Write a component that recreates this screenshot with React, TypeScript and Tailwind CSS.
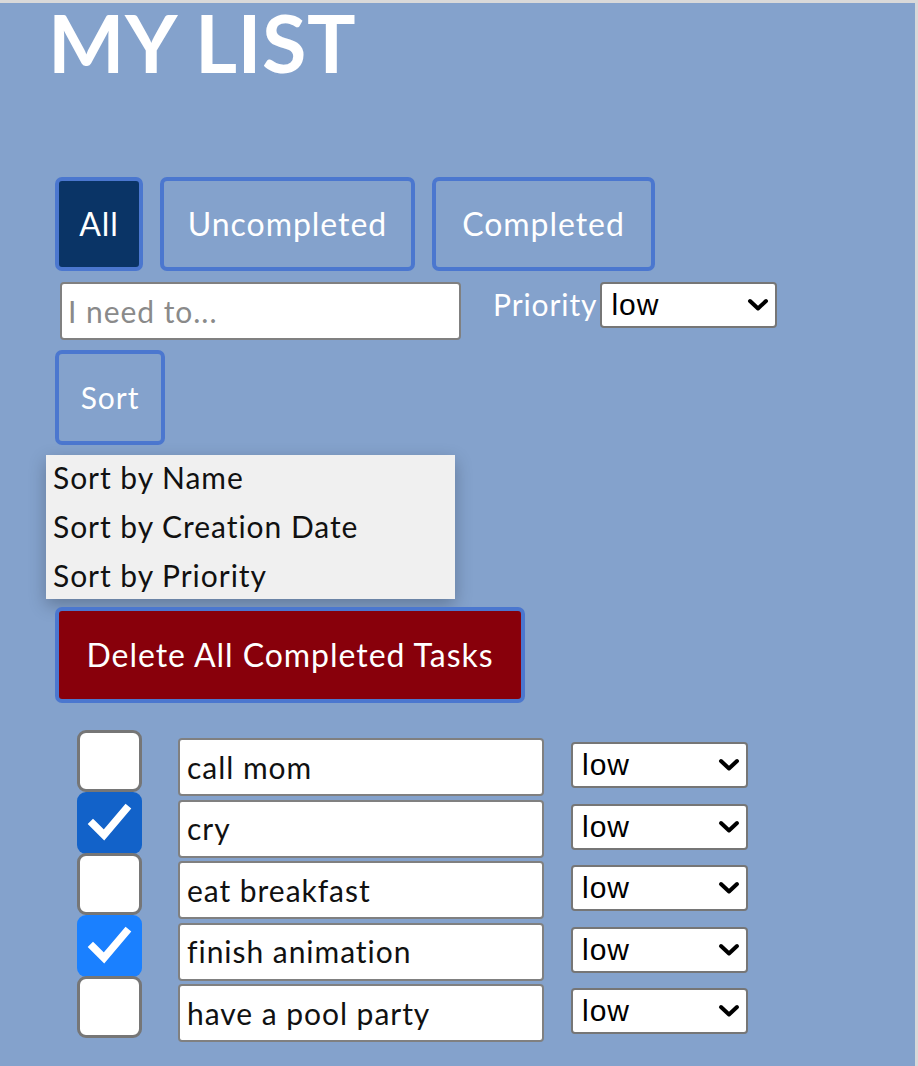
import React from "react";

const font = { fontFamily: "Lato, 'Open Sans', sans-serif" };

function Chevron() {
  return (
    <svg width="22" height="14" viewBox="0 0 22 14" className="shrink-0">
      <polyline points="3,3 11,10.5 19,3" fill="none" stroke="#000" strokeWidth="4" strokeLinecap="round" strokeLinejoin="round" />
    </svg>
  );
}

function Select({ w, h }: { w: string; h: string }) {
  return (
    <div className={`${w} ${h} bg-white border-2 border-[#767676] rounded-[4px] flex items-center justify-between pl-[9px] pr-[6px]`}>
      <span className="text-[30px] text-black leading-none" style={{ fontFamily: "'Liberation Sans', Arial, sans-serif" }}>low</span>
      <Chevron />
    </div>
  );
}

function Check({ checked, color }: { checked: boolean; color?: string }) {
  if (checked) {
    return (
      <div className={`w-[65px] h-[62px] rounded-[9px] flex items-center justify-center ${color}`}>
        <svg width="46" height="42" viewBox="0 0 46 42">
          <polyline points="6,22 17,33 39,7" fill="none" stroke="#fff" strokeWidth="7.5" strokeLinecap="square" strokeLinejoin="miter" />
        </svg>
      </div>
    );
  }
  return <div className="w-[65px] h-[62px] rounded-[9px] bg-white border-[3px] border-[#767676]" />;
}

const tasks = [
  { name: "call mom", checked: false },
  { name: "cry", checked: true, color: "bg-[#1262c9]" },
  { name: "eat breakfast", checked: false },
  { name: "finish animation", checked: true, color: "bg-[#1a80ff]" },
  { name: "have a pool party", checked: false },
];

export default function App() {
  return (
    <div className="w-[918px] h-[1066px] overflow-hidden bg-[#d9d9d9] pt-[3px] pr-[3px]" style={font}>
      <div className="h-full bg-[#84a2cc] flex flex-col tracking-[0.06em]">
        <h1 className="text-white font-bold text-[81px] leading-[78px] pl-[48px] tracking-[0.5px]">MY LIST</h1>

        <div className="flex gap-[17px] pl-[55px] mt-[96px]">
          <button className="h-[94px] w-[88px] rounded-[7px] border-[4px] border-[#4b77cf] bg-[#0a3466] text-white text-[32px]">All</button>
          <button className="h-[94px] w-[255px] rounded-[7px] border-[4px] border-[#4b77cf] text-white text-[32px]">Uncompleted</button>
          <button className="h-[94px] w-[223px] rounded-[7px] border-[4px] border-[#4b77cf] text-white text-[32px]">Completed</button>
        </div>

        <div className="flex items-start pl-[60px] mt-[11px]">
          <div className="w-[401px] h-[58px] bg-white border-2 border-[#808080] rounded-[4px] flex items-center pl-[6px]">
            <span className="text-[30px] text-[#8a8a8a]">I need to...</span>
          </div>
          <span className="text-white text-[30px] ml-[32px] mt-[2px] leading-[40px] tracking-[0.03em]">Priority</span>
          <div className="ml-[3px]">
            <Select w="w-[177px]" h="h-[46px]" />
          </div>
        </div>

        <div className="pl-[55px] mt-[10px]">
          <button className="h-[95px] w-[110px] rounded-[7px] border-[4px] border-[#4b77cf] text-white text-[30px]">Sort</button>
        </div>

        <div className="ml-[46px] mt-[10px] w-[409px] bg-[#f0f0f0] shadow-[0_6px_16px_rgba(0,0,0,0.25)] py-[2px] text-[30px] text-[#111]">
          <div className="h-[49px] leading-[40px] pl-[7px]">Sort by Name</div>
          <div className="h-[49px] leading-[40px] pl-[7px]">Sort by Creation Date</div>
          <div className="h-[42px] leading-[40px] pl-[7px]">Sort by Priority</div>
        </div>

        <div className="pl-[55px] mt-[8px]">
          <button className="h-[96px] w-[470px] rounded-[7px] border-[4px] border-[#4b77cf] bg-[#88000b] text-white text-[32px]">Delete All Completed Tasks</button>
        </div>

        <div className="flex flex-col pl-[77px] mt-[27px]">
          {tasks.map((t, i) => (
            <div key={i} className="flex items-start h-[61.5px]">
              <Check checked={t.checked} color={t.color} />
              <div className="ml-[36px] mt-[8px] w-[366px] h-[58px] bg-white border-2 border-[#808080] rounded-[4px] flex items-center pl-[7px]">
                <span className="text-[30px] text-[#111]">{t.name}</span>
              </div>
              <div className="ml-[27px] mt-[12px]">
                <Select w="w-[177px]" h="h-[46px]" />
              </div>
            </div>
          ))}
        </div>
      </div>
    </div>
  );
}
